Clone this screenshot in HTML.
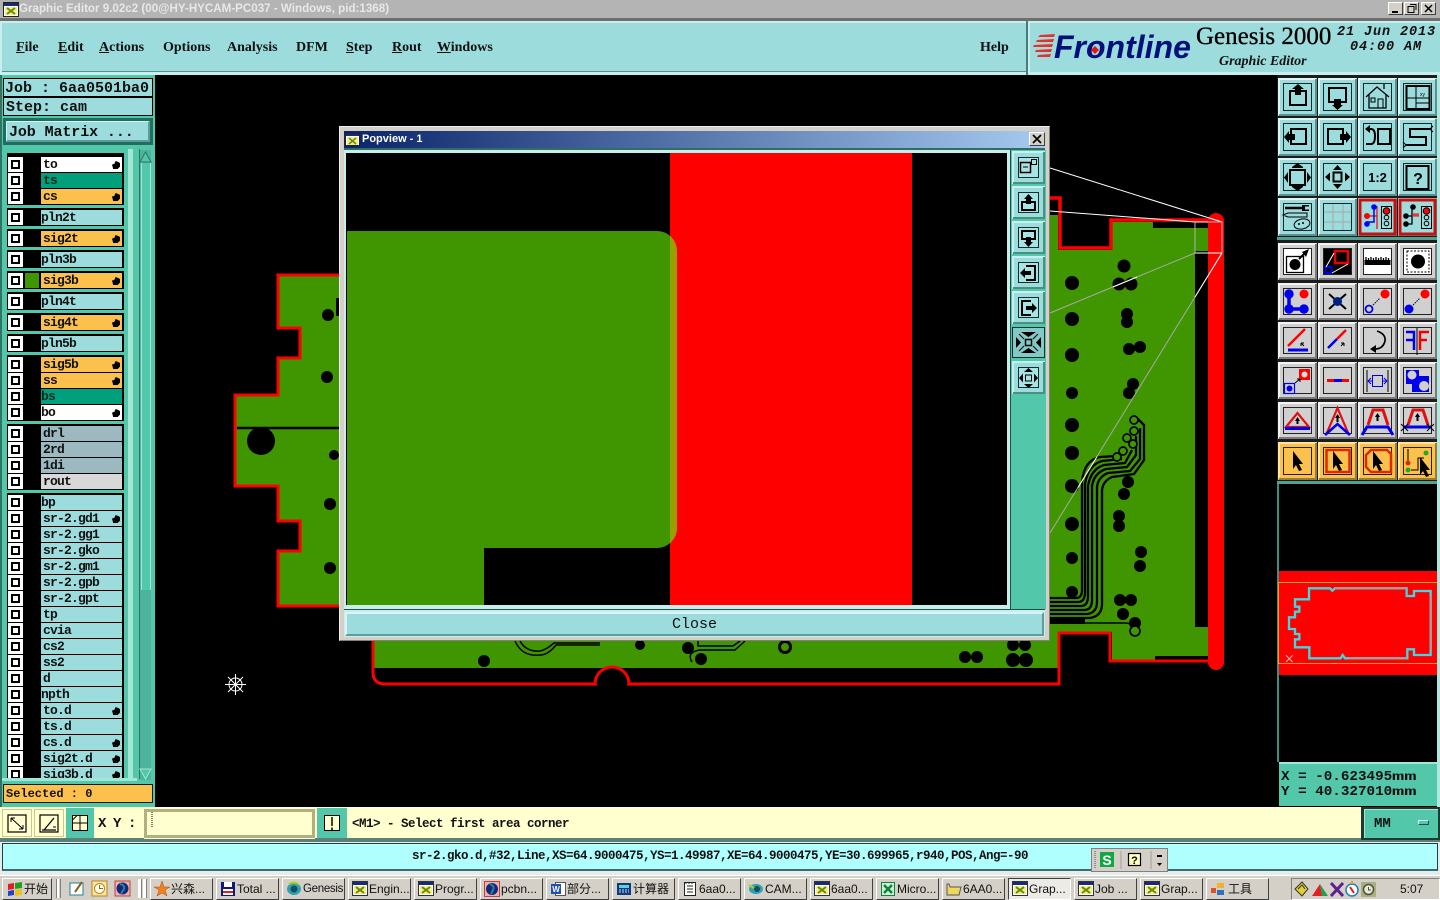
<!DOCTYPE html>
<html><head><meta charset="utf-8"><title>Graphic Editor</title>
<style>
html,body{margin:0;padding:0;background:#000}
#p{position:relative;width:1440px;height:900px;overflow:hidden;background:#000;font-family:"Liberation Mono",monospace}
#p div,#p span.a,#p svg.a{position:absolute}
.m{font:bold 14px/16px "Liberation Serif",serif;color:#111;top:40px}
.m u{text-decoration:underline}
.mono{font-family:"Liberation Mono",monospace;font-weight:bold;color:#111;white-space:pre}
.fr{background:#000;left:7px;width:117px}
.r{left:8px;width:115px;height:15px}
.c{left:0;top:0;width:15px;height:15px;background:#fff}
.c:after{content:"";position:absolute;left:3px;top:3px;width:5px;height:5px;border:2px solid #000;background:#fff}
.n{left:33px;width:81px;height:15px;background:#9cdcdc;font:bold 13px/16px "Liberation Mono",monospace;letter-spacing:-.8px;color:#111;box-sizing:border-box;white-space:pre;padding-left:2px;overflow:hidden}
.z{padding-left:0}
.w{background:#fff}.t{background:#00a07c;color:#002a20}.o{background:#fcc04c}.g{background:#9cb8c0}.l{background:#d8d8d8}
.h{right:2px;top:4px;width:8px;height:8px;background:#000;clip-path:polygon(0 45%,30% 35%,45% 0,70% 10%,100% 25%,100% 70%,70% 100%,15% 100%)}
.tb{top:878px;width:63px;height:22px;background:#d4d0c8;border-top:1px solid #fff;border-left:1px solid #fff;border-right:1px solid #404040;border-bottom:1px solid #404040;box-sizing:border-box;font:12px/20px "Liberation Sans","Noto Sans CJK SC",sans-serif;color:#111;white-space:nowrap;overflow:hidden}
.tb span{position:absolute;left:20px;top:0}
.tb svg{position:absolute;left:3px;top:2px}
.wb{top:2px;width:15px;height:13px;background:#d4d0c8;border-top:1px solid #fff;border-left:1px solid #fff;border-right:1px solid #404040;border-bottom:1px solid #404040;box-sizing:border-box}
.mm{display:inline-block;font-size:12px;transform:scaleX(1.7);transform-origin:left center}
</style></head><body><div id="p">

<!-- canvas -->
<svg class="a" style="left:0;top:0" width="1440" height="900" viewBox="0 0 1440 900">
<path d="M345 275H278V328H300V358H278V395H235V486H278V521H300V551H278V606H345Z" fill="#409600" stroke="#f00" stroke-width="3"/>
<path d="M237 428H345" stroke="#000" stroke-width="2.5"/>
<g fill="#000"><circle cx="261" cy="441" r="14"/><circle cx="328" cy="315" r="6"/><circle cx="327" cy="377" r="6"/><circle cx="334" cy="455" r="5"/><circle cx="330" cy="504" r="6"/><circle cx="330" cy="568" r="6"/><rect x="336" y="298" width="4" height="18"/></g>
<!-- right part -->
<path d="M1045 215H1058V250H1112V222H1208V661H1112V632H1058V668H373V635H1045Z" fill="#409600"/>
<rect x="1153" y="222" width="55" height="6" fill="#000"/>
<rect x="1195" y="251" width="13" height="376" fill="#000"/>
<rect x="1155" y="656" width="53" height="5" fill="#000"/>
<rect x="1208" y="213" width="16" height="457" rx="8" fill="#f00"/>
<path d="M1045 198H1060V248H1111V220H1210" fill="none" stroke="#f00" stroke-width="3.5"/>
<path d="M1210 661H1110V633H1059V684H385Q373 684 373 672V635" fill="none" stroke="#f00" stroke-width="3"/>
<path d="M595 684A17 17 0 0 1 629 684" fill="#000" stroke="#f00" stroke-width="3"/>
<rect x="597" y="682" width="30" height="4" fill="#000"/>
<g fill="#000">
<circle cx="1072" cy="283" r="7"/><circle cx="1072" cy="319" r="7"/><circle cx="1072" cy="355" r="7"/><circle cx="1072" cy="393" r="6"/><circle cx="1072" cy="425" r="7"/><circle cx="1072" cy="453" r="7"/><circle cx="1072" cy="486" r="7"/><circle cx="1072" cy="524" r="7"/><circle cx="1072" cy="558" r="6"/><circle cx="1072" cy="592" r="6"/>
<circle cx="1124" cy="266" r="6.5"/><circle cx="1119" cy="284" r="6.5"/><circle cx="1131" cy="284" r="6.5"/><circle cx="1127" cy="314" r="6"/><circle cx="1127" cy="322" r="6"/><circle cx="1129" cy="349" r="6"/><circle cx="1140" cy="347" r="6"/><circle cx="1133" cy="384" r="6"/><circle cx="1129" cy="393" r="6"/><circle cx="1128" cy="482" r="6"/><circle cx="1124" cy="494" r="6"/><circle cx="1119" cy="516" r="6"/><circle cx="1119" cy="526" r="6"/><circle cx="1141" cy="552" r="6"/><circle cx="1140" cy="566" r="6"/><circle cx="1120" cy="600" r="6"/><circle cx="1131" cy="600" r="6"/><circle cx="1123" cy="614" r="6"/><circle cx="1135" cy="623" r="6"/>
<rect x="1050" y="619" width="35" height="5"/>
<circle cx="484" cy="661" r="6"/><circle cx="640" cy="645" r="5"/><circle cx="688" cy="648" r="6"/><circle cx="701" cy="659" r="6"/><circle cx="965" cy="657" r="6"/><circle cx="977" cy="657" r="6"/><circle cx="1013" cy="645" r="6"/><circle cx="1025" cy="645" r="6"/><circle cx="1013" cy="660" r="7"/><circle cx="1026" cy="660" r="7"/>
</g>
<circle cx="785" cy="647" r="5.5" fill="#409600" stroke="#000" stroke-width="3"/>
<g fill="none" stroke="#000" stroke-width="2.3">
<path d="M1045 598H1076Q1082 598 1082 590V482Q1084 460 1100 457L1116 456"/>
<path d="M1045 602H1078Q1085 602 1085 592V484Q1088 465 1102 461L1122 459"/>
<path d="M1045 606H1081Q1088 606 1088 596V486Q1091 469 1104 465L1125 463L1132 450"/>
<path d="M1045 610H1084Q1092 610 1092 600V486Q1094 473 1106 469L1127 467L1136 455V436"/>
<path d="M1045 614H1088Q1097 612 1097 602V487Q1098 477 1108 473L1130 471L1140 459V428"/>
<path d="M1045 618H1090Q1102 616 1102 604V490Q1103 481 1112 477L1134 474L1144 460V425L1137 418"/>
<path d="M1085 623H1125Q1132 623 1134 628" stroke-width="1.5"/>
<path d="M515 641Q522 657 540 655Q548 655 556 645H600" stroke-width="1.5"/><path d="M520 641Q526 652 540 651Q546 650 554 643H600" stroke-width="1.5"/>
<path d="M692 662Q686 652 700 650H735L745 641" stroke-width="1.5"/><path d="M698 641V646H733L740 641" stroke-width="1.5"/>
</g>
<g fill="#409600" stroke="#000" stroke-width="1.7"><circle cx="1134" cy="420" r="4"/><circle cx="1134" cy="431" r="4"/><circle cx="1127" cy="438" r="4"/><circle cx="1133" cy="444" r="4"/><circle cx="1123" cy="451" r="4"/><circle cx="1117" cy="457" r="4"/><circle cx="1135" cy="631" r="5"/></g>
<g fill="none" stroke-width="1">
<path d="M1050 168L1222 222M1050 211L1195 222" stroke="#fff"/>
<path d="M1195 222H1222V253H1195Z" stroke="#b0b0b0"/>
<path d="M1195 222H1208M1195 253H1222" stroke="#fff"/>
<path d="M1050 313L1195 253" stroke="#a8a8a8"/>
<path d="M1050 533L1222 253" stroke="#a8a8a8"/>
<path d="M1113 287L1137 277M1078 487.500L1097 456.600M1222 253L1195 297" stroke="#fff"/>
</g>
<!-- crosshair -->
<g stroke="#fff" stroke-width="1" fill="none"><path d="M235.500 674V695M225 684.500H246M228 677L243 692M243 677L228 692"/><circle cx="235.500" cy="684.500" r="6.500"/></g>
</svg>

<!-- title bar -->
<div style="left:0;top:0;width:1440px;height:18px;background:#b4b4b4"></div>
<div style="left:0;top:18px;width:1440px;height:3px;background:#6e6e6e"></div>
<svg class="a" style="left:3px;top:2px" width="16" height="15" viewBox="0 0 16 15"><rect x=".5" y=".5" width="15" height="14" fill="#fff" stroke="#222"/><rect x="1" y="1" width="14" height="3" fill="#1a2a7a"/><rect x="2" y="5" width="12" height="8" fill="#f4f088"/><path d="M4 6L12 12M12 6L4 12" stroke="#6a8a10" stroke-width="2"/></svg>
<div style="left:19px;top:2px;font:bold 11.600px/14px 'Liberation Sans',sans-serif;color:#e8e8e8;white-space:pre">Graphic Editor 9.02c2 (00@HY-HYCAM-PC037 - Windows, pid:1368)</div>
<div class="wb" style="left:1388px"><svg width="13" height="11" style="position:absolute;left:0;top:0"><path d="M3 9H9" stroke="#000" stroke-width="2"/></svg></div>
<div class="wb" style="left:1404px"><svg width="13" height="11" style="position:absolute;left:0;top:0"><path d="M5 1.500H11V7M3 3.500H9V9.500H3Z" stroke="#000" fill="#d4d0c8"/></svg></div>
<div class="wb" style="left:1421px"><svg width="13" height="11" style="position:absolute;left:0;top:0"><path d="M3 2L10 9M10 2L3 9" stroke="#000" stroke-width="1.500"/></svg></div>

<!-- menu -->
<div style="left:0;top:21px;width:1440px;height:54px;background:#c8eeee"></div>
<div style="left:2px;top:23px;width:1024px;height:48px;background:#9cdcdc;border-bottom:1px solid #5c8c8c;border-right:1px solid #5c8c8c"></div>
<div style="left:1026px;top:21px;width:2px;height:54px;background:#4a7a7a"></div>
<div style="left:1030px;top:23px;width:410px;height:49px;background:#9cdcdc"></div>
<div class="m" style="left:16px"><u>F</u>ile</div>
<div class="m" style="left:58px"><u>E</u>dit</div>
<div class="m" style="left:99px"><u>A</u>ctions</div>
<div class="m" style="left:163px">Options</div>
<div class="m" style="left:227px">Analysis</div>
<div class="m" style="left:296px">DFM</div>
<div class="m" style="left:346px"><u>S</u>tep</div>
<div class="m" style="left:392px"><u>R</u>out</div>
<div class="m" style="left:437px"><u>W</u>indows</div>
<div class="m" style="left:980px">Help</div>
<svg class="a" style="left:1032px;top:33px" width="26" height="26" viewBox="0 0 26 26"><g fill="#e8302a"><path d="M8 2L23 1L22 4L6 4Z"/><path d="M5 7L22 6L21 9L4 9Z"/><path d="M2 12L21 11L20 14L1 14Z"/><path d="M4 17L20 16L19 19L3 19Z"/><path d="M6 22L19 21L18 24L5 24Z"/></g></svg>
<div style="left:1054px;top:29px;font:italic bold 32px/36px 'Liberation Sans',sans-serif;color:#00107a;white-space:pre">Frontline</div>
<svg class="a" style="left:1089px;top:44px" width="12" height="12"><path d="M6 2L10 6L6 10L2 6Z" fill="#e81010"/></svg>
<div style="left:1196px;top:22px;font:25px/30px 'Liberation Serif',serif;color:#000;-webkit-text-stroke:.3px #000;white-space:pre">Genesis 2000</div>
<div style="left:1219px;top:54px;font:italic bold 14px/16px 'Liberation Serif',serif;color:#111;white-space:pre">Graphic Editor</div>
<div style="left:1337px;top:25px;font:italic bold 13.500px/15px 'Liberation Mono',monospace;letter-spacing:.9px;color:#111;white-space:pre">21 Jun 2013</div>
<div style="left:1350px;top:40px;font:italic bold 13.500px/15px 'Liberation Mono',monospace;letter-spacing:.9px;color:#111;white-space:pre">04:00 AM</div>

<!-- left panel -->
<div style="left:0;top:75px;width:155px;height:733px;background:#52c7a9"></div>
<div style="left:0;top:75px;width:2px;height:733px;background:#2f7565"></div>
<div style="left:3px;top:78px;width:150px;height:38px;background:#000"></div>
<div class="mono" style="left:4px;top:79px;width:148px;height:17px;background:#9cdcdc;font-size:15px;line-height:19px;padding-left:1px;box-sizing:border-box">Job : 6aa0501ba0</div>
<div class="mono" style="left:4px;top:98px;width:148px;height:17px;background:#9cdcdc;font-size:15px;line-height:19px;padding-left:2px;box-sizing:border-box">Step: cam</div>
<div style="left:3px;top:118px;width:150px;height:27px;background:#1f6f5c"></div>
<div class="mono" style="left:6px;top:121px;width:144px;height:21px;background:#9cdcdc;border-top:1px solid #d8f5f5;border-left:1px solid #d8f5f5;border-right:2px solid #5c9c9c;border-bottom:2px solid #5c9c9c;box-sizing:border-box;font-size:15px;line-height:22px;padding-left:2px;letter-spacing:-.1px">Job Matrix ...</div>

<!-- scroll -->
<div style="left:128px;top:149px;width:5px;height:630px;background:#a3e6d6"></div>
<div style="left:139px;top:149px;width:1px;height:630px;background:#2f7565"></div>
<div style="left:140px;top:150px;width:11px;height:630px;background:#4db39a"></div>
<div style="left:141px;top:163px;width:10px;height:427px;background:#52c7a9;border-left:1px solid #a3e6d6;border-right:1px solid #a3e6d6;box-sizing:border-box"></div>
<svg class="a" style="left:139px;top:150px" width="13" height="14"><path d="M6.500 2L12 12H1Z" fill="#52c7a9" stroke="#2f7565"/></svg>
<svg class="a" style="left:139px;top:767px" width="13" height="13"><path d="M6.500 12L12 2H1Z" fill="#52c7a9" stroke="#a3e6d6"/></svg>

<!-- layers -->
<div class="fr" style="top:153px;height:52px"></div>
<div class="fr" style="top:208px;height:18px"></div>
<div class="fr" style="top:229px;height:18px"></div>
<div class="fr" style="top:250px;height:18px"></div>
<div class="fr" style="top:271px;height:18px"></div>
<div class="fr" style="top:292px;height:18px"></div>
<div class="fr" style="top:313px;height:18px"></div>
<div class="fr" style="top:334px;height:18px"></div>
<div class="fr" style="top:355px;height:66px"></div>
<div class="fr" style="top:424px;height:66px"></div>
<div class="fr" style="top:493px;height:285px"></div>

<div class="r" style="top:157px"><div class="c"></div><div class="n w">to<div class="h"></div></div></div>
<div class="r" style="top:173px"><div class="c"></div><div class="n t">ts</div></div>
<div class="r" style="top:189px"><div class="c"></div><div class="n o">cs<div class="h"></div></div></div>
<div class="r" style="top:210px"><div class="c"></div><div class="n z">pln2t</div></div>
<div class="r" style="top:231px"><div class="c"></div><div class="n o">sig2t<div class="h"></div></div></div>
<div class="r" style="top:252px"><div class="c"></div><div class="n z">pln3b</div></div>
<div class="r" style="top:273px"><div class="c"></div><div style="left:17px;top:0;width:14px;height:15px;background:#409600"></div><div class="n o">sig3b<div class="h"></div></div></div>
<div class="r" style="top:294px"><div class="c"></div><div class="n z">pln4t</div></div>
<div class="r" style="top:315px"><div class="c"></div><div class="n o">sig4t<div class="h"></div></div></div>
<div class="r" style="top:336px"><div class="c"></div><div class="n z">pln5b</div></div>
<div class="r" style="top:357px"><div class="c"></div><div class="n o">sig5b<div class="h"></div></div></div>
<div class="r" style="top:373px"><div class="c"></div><div class="n o">ss<div class="h"></div></div></div>
<div class="r" style="top:389px"><div class="c"></div><div class="n t z">bs</div></div>
<div class="r" style="top:405px"><div class="c"></div><div class="n w z">bo<div class="h"></div></div></div>
<div class="r" style="top:426px"><div class="c"></div><div class="n g">drl</div></div>
<div class="r" style="top:442px"><div class="c"></div><div class="n g">2rd</div></div>
<div class="r" style="top:458px"><div class="c"></div><div class="n g">1di</div></div>
<div class="r" style="top:474px"><div class="c"></div><div class="n l">rout</div></div>
<div class="r" style="top:495px"><div class="c"></div><div class="n z">bp</div></div>
<div class="r" style="top:511px"><div class="c"></div><div class="n">sr-2.gd1<div class="h"></div></div></div>
<div class="r" style="top:527px"><div class="c"></div><div class="n">sr-2.gg1</div></div>
<div class="r" style="top:543px"><div class="c"></div><div class="n">sr-2.gko</div></div>
<div class="r" style="top:559px"><div class="c"></div><div class="n">sr-2.gm1</div></div>
<div class="r" style="top:575px"><div class="c"></div><div class="n">sr-2.gpb</div></div>
<div class="r" style="top:591px"><div class="c"></div><div class="n">sr-2.gpt</div></div>
<div class="r" style="top:607px"><div class="c"></div><div class="n">tp</div></div>
<div class="r" style="top:623px"><div class="c"></div><div class="n">cvia</div></div>
<div class="r" style="top:639px"><div class="c"></div><div class="n">cs2</div></div>
<div class="r" style="top:655px"><div class="c"></div><div class="n">ss2</div></div>
<div class="r" style="top:671px"><div class="c"></div><div class="n">d</div></div>
<div class="r" style="top:687px"><div class="c"></div><div class="n z">npth</div></div>
<div class="r" style="top:703px"><div class="c"></div><div class="n">to.d<div class="h"></div></div></div>
<div class="r" style="top:719px"><div class="c"></div><div class="n">ts.d</div></div>
<div class="r" style="top:735px"><div class="c"></div><div class="n">cs.d<div class="h"></div></div></div>
<div class="r" style="top:751px"><div class="c"></div><div class="n">sig2t.d<div class="h"></div></div></div>
<div class="r" style="top:767px;height:11px;overflow:hidden"><div class="c"></div><div class="n">sig3b.d<div class="h"></div></div></div>
<div style="left:2px;top:778px;width:135px;height:3px;background:#a3e6d6"></div>
<div class="mono" style="left:3px;top:784px;width:150px;height:19px;background:#fcc04c;border:1px solid #1a1a1a;box-sizing:border-box;font-size:12px;line-height:19px;padding-left:2px">Selected : 0</div>

<!-- right toolbar -->
<div style="left:1277px;top:75px;width:163px;height:409px;background:#1c1c1c"></div>
<div style="left:1277px;top:75px;width:160px;height:2px;background:#1c1c1c"></div>
<div style="left:1277px;top:237px;width:160px;height:3px;background:#52a090"></div>
<div style="left:1277px;top:481px;width:163px;height:3px;background:#52a090"></div>
<div style="left:1277px;top:484px;width:2px;height:278px;background:#3f8f7f"></div>
<div style="left:1437px;top:75px;width:3px;height:733px;background:#b0e8e0"></div>
<svg class="a" style="left:0;top:0" width="1440" height="900" viewBox="0 0 1440 900">
<defs>
<g id="bc"><rect width="39" height="38" fill="#9cdcdc"/><path d="M1 37V1H38" fill="none" stroke="#dcf6f6" stroke-width="2"/><path d="M1 37H38V1" fill="none" stroke="#5a9090" stroke-width="2"/><rect x="5.500" y="5.500" width="28" height="27" fill="none" stroke="#102a2a"/></g>
<g id="bg"><rect width="39" height="37" fill="#d0d0d0"/><path d="M1 36V1H38" fill="none" stroke="#f4f4f4" stroke-width="2"/><path d="M1 36H38V1" fill="none" stroke="#7a7a7a" stroke-width="2"/><rect x="5.500" y="5.500" width="28" height="26" fill="none" stroke="#222"/></g>
<g id="bo"><rect width="39" height="38" fill="#fcc04c"/><path d="M1 37V1H38" fill="none" stroke="#ffe6a0" stroke-width="2"/><path d="M1 37H38V1" fill="none" stroke="#9c7a30" stroke-width="2"/><rect x="5.500" y="5.500" width="28" height="27" fill="none" stroke="#222"/></g>
<g id="bw"><rect width="39" height="37" fill="#d0d0d0"/><path d="M1 36V1H38" fill="none" stroke="#f4f4f4" stroke-width="2"/><path d="M1 36H38V1" fill="none" stroke="#7a7a7a" stroke-width="2"/><rect x="5.500" y="5.500" width="28" height="26" fill="#fff" stroke="#222"/></g>
<path id="cur" d="M0 0L10 13H6L9 19L6 20L3 14L0 18Z" fill="#000"/>
<g id="tl"><rect x="23.500" y="8.500" width="10" height="22" fill="#9cdcdc" stroke="#000"/><circle cx="28.500" cy="13" r="3.300" fill="#f00" stroke="#000"/><circle cx="28.500" cy="19.500" r="2.300" fill="none" stroke="#000"/><circle cx="28.500" cy="25.500" r="2.300" fill="none" stroke="#000"/></g>
</defs>
<!-- row1 -->
<g transform="translate(1278 78)"><use href="#bc"/><rect x="12" y="13" width="16" height="14" fill="none" stroke="#000" stroke-width="2"/><path d="M20 6L26 11H23V17H17V11H14Z"/></g>
<g transform="translate(1318 78)"><use href="#bc"/><rect x="11" y="10" width="17" height="14" fill="none" stroke="#000" stroke-width="2"/><path d="M19.500 32L14 27H16V21H23V27H25Z"/></g>
<g transform="translate(1358 78)"><use href="#bc"/><path d="M8 19L19 9L31 19M11 17V30H28V17M26 11V6" fill="none" stroke="#000" stroke-width="1.300"/><rect x="13" y="20" width="4" height="4" fill="none" stroke="#000"/><rect x="20" y="21" width="5" height="9" fill="none" stroke="#000"/></g>
<g transform="translate(1398 78)"><use href="#bc"/><rect x="8.500" y="8" width="23" height="23" fill="none" stroke="#000" stroke-width="2"/><path d="M18 8V31M8 20H32M18 25H32" stroke="#000"/><text x="22" y="18" font-size="5" font-family="Liberation Sans" fill="#000">xy</text></g>
<!-- row2 -->
<g transform="translate(1278 118)"><use href="#bc"/><rect x="13" y="11" width="15" height="15" fill="none" stroke="#000" stroke-width="2"/><path d="M6 19L11 13V16H17V22H11V25Z"/></g>
<g transform="translate(1318 118)"><use href="#bc"/><rect x="10" y="11" width="15" height="15" fill="none" stroke="#000" stroke-width="2"/><path d="M33 19L28 13V16H22V22H28V25Z"/></g>
<g transform="translate(1358 118)"><use href="#bc"/><rect x="20" y="11" width="12" height="15" fill="none" stroke="#000" stroke-width="2"/><path d="M11 11H13Q17 11 17 18Q17 26 13 26H8" fill="none" stroke="#000" stroke-width="2"/><path d="M7 11L12 7V15Z"/></g>
<g transform="translate(1398 118)"><use href="#bc"/><path d="M32 11H12V19H28V27H8" fill="none" stroke="#000" stroke-width="2"/><path d="M32 11L35 8M32 11L35 14M8 27L5 24M8 27L5 30" stroke="#000"/></g>
<!-- row3 -->
<g transform="translate(1278 158)"><use href="#bc"/><rect x="12" y="12" width="15" height="15" fill="none" stroke="#000" stroke-width="2"/><path d="M19.500 5L25 9V10H14V9ZM19.500 33L25 29V28H14V29ZM6 19.500L10 14V25ZM33 19.500L29 14V25Z"/></g>
<g transform="translate(1318 158)"><use href="#bc"/><rect x="15.500" y="14.500" width="8" height="9" fill="none" stroke="#000" stroke-width="2"/><path d="M19.500 7L24 12H15ZM19.500 31L24 26H15ZM7 19L12 14.500V23.500ZM32 19L27 14.500V23.500Z"/></g>
<g transform="translate(1358 158)"><use href="#bc"/><text x="19.500" y="24" text-anchor="middle" font-size="13" font-weight="bold" font-family="Liberation Sans" fill="#000">1:2</text></g>
<g transform="translate(1398 158)"><use href="#bc"/><rect x="8.500" y="8" width="22" height="23" fill="none" stroke="#000" stroke-width="2"/><text x="20" y="26" text-anchor="middle" font-size="16" font-weight="bold" font-family="Liberation Sans" fill="#000">?</text></g>
<!-- row4 -->
<g transform="translate(1278 198)"><use href="#bc"/><path d="M7 10H25" stroke="#000" stroke-width="2.500"/><path d="M24 7H31V8.500H27V11.500H31V13H24Z"/><path d="M5 17L10 15H29V19H10Z" fill="none" stroke="#000"/><ellipse cx="24" cy="26" rx="8" ry="5" fill="none" stroke="#000" transform="rotate(-12 24 26)"/><circle cx="21" cy="26" r="1" /><circle cx="25" cy="25" r="1"/></g>
<g transform="translate(1318 198)"><use href="#bc"/><path d="M15 6V32M25 6V32M6 14H33M6 24H33" stroke="#a8a8a8" stroke-width="1"/></g>
<g transform="translate(1358 198)"><use href="#bc"/><rect x="2" y="2" width="35" height="34" fill="#9cdcdc" stroke="#c81010" stroke-width="3"/><use href="#tl"/><path d="M19 8V31M8 18H19" stroke="#f00" stroke-width="1.200"/><circle cx="9" cy="18" r="3" fill="#f00"/><path d="M16 10V24H8" fill="none" stroke="#00f" stroke-width="1.500"/><circle cx="16" cy="9" r="2.800" fill="#00f"/><circle cx="9" cy="26" r="2.800" fill="#00f"/></g>
<g transform="translate(1398 198)"><use href="#bc"/><rect x="2" y="2" width="35" height="34" fill="#9cdcdc" stroke="#c81010" stroke-width="3"/><use href="#tl"/><path d="M14 9V18H8M14 18V26H8" fill="none" stroke="#000" stroke-width="1.300"/><path d="M14 17H21M16 15V19M18 15V19M20 15V19" stroke="#f00"/><circle cx="15" cy="9" r="2.800"/><circle cx="8" cy="18" r="2.800"/><circle cx="8" cy="26" r="2.800"/></g>
<!-- row5 -->
<g transform="translate(1278 243)"><use href="#bw"/><rect x="8.500" y="13.500" width="17" height="16" fill="#fff" stroke="#000" stroke-width="1.300"/><circle cx="17" cy="21.500" r="5.500"/><path d="M21 16L27 10" stroke="#000" stroke-width="2"/><path d="M31 6L28 14L24 9Z"/></g>
<g transform="translate(1318 243)"><use href="#bw"/><rect x="6" y="6" width="27" height="25" fill="#000"/><rect x="17" y="8" width="13" height="12" fill="none" stroke="#e00" stroke-width="2.500"/><rect x="7.500" y="24" width="6" height="6" fill="none" stroke="#00e" stroke-width="2"/><path d="M16 10L8 24M30 21L14 30" stroke="#fff"/></g>
<g transform="translate(1358 243)"><use href="#bw"/><rect x="6.500" y="17" width="26" height="5" fill="#000"/><path d="M8 14V17M10.500 15V17M13 14V17M15.500 15V17M18 14V17M20.500 15V17M23 14V17M25.500 15V17M28 14V17M30.500 15V17" stroke="#000" stroke-width="1.300"/></g>
<g transform="translate(1398 243)"><use href="#bw"/><rect x="9" y="8" width="22" height="21" fill="none" stroke="#000" stroke-dasharray="2 1.500"/><circle cx="20" cy="18.500" r="7"/></g>
<!-- row6 -->
<g transform="translate(1278 283)"><use href="#bg"/><path d="M11 11V26H26" fill="none" stroke="#00e" stroke-width="3.500"/><circle cx="11" cy="11" r="4.700" fill="#00e"/><circle cx="11" cy="26" r="4.700" fill="#00e"/><circle cx="26" cy="26" r="4.700" fill="#00e"/><circle cx="26" cy="11" r="4.500" fill="#f00"/></g>
<g transform="translate(1318 283)"><use href="#bg"/><path d="M11 11L28 26M28 11L11 26" stroke="#000" stroke-width="2"/><circle cx="19.500" cy="18.500" r="4.500" fill="#002080"/></g>
<g transform="translate(1358 283)"><use href="#bg"/><circle cx="27" cy="11" r="4.500" fill="#f00"/><circle cx="11" cy="26" r="3.500" fill="none" stroke="#00e" stroke-width="1.800"/><path d="M15 22L22 15" stroke="#000" stroke-dasharray="1.500 1"/></g>
<g transform="translate(1398 283)"><use href="#bg"/><circle cx="27" cy="11" r="4.500" fill="#f00"/><circle cx="11" cy="26" r="4.500" fill="#00e"/><path d="M15 22L22 15" stroke="#000" stroke-dasharray="1.500 1"/></g>
<!-- row7 -->
<g transform="translate(1278 322)"><use href="#bg"/><path d="M10 24L27 7" stroke="#f00" stroke-width="2.500"/><path d="M10 28H30" stroke="#00e" stroke-width="3"/><path d="M23 21L26 24M23 21V24M23 21H26" stroke="#000"/></g>
<g transform="translate(1318 322)"><use href="#bg"/><path d="M19 17L28 8" stroke="#f00" stroke-width="2.500"/><path d="M10 26L19 17" stroke="#00e" stroke-width="2.500"/><path d="M23 24L26 21M26 21H23M26 21V24" stroke="#000"/></g>
<g transform="translate(1358 322)"><use href="#bg"/><path d="M19 9Q28 12 27 19Q25 27 17 27" fill="none" stroke="#000" stroke-width="1.700"/><path d="M12 27L18 23V31Z"/></g>
<g transform="translate(1398 322)"><use href="#bg"/><path d="M8 10H16V28M8 18H16" fill="none" stroke="#00e" stroke-width="2.500"/><path d="M19 6V33" stroke="#000"/><path d="M22 28V10H31M22 18H29" fill="none" stroke="#e00" stroke-width="2.500"/></g>
<!-- row8 -->
<g transform="translate(1278 362)"><use href="#bg"/><rect x="21" y="7" width="11" height="11" fill="#f00"/><circle cx="26.500" cy="12.500" r="3" fill="#ddd"/><rect x="6.500" y="21.500" width="10" height="10" fill="none" stroke="#00e" stroke-width="1.200"/><circle cx="11.500" cy="26.500" r="3" fill="#00e"/><path d="M17 21L22 17M22 17H19M22 17V20" stroke="#000"/></g>
<g transform="translate(1318 362)"><use href="#bg"/><path d="M9 18.500H31" stroke="#f00" stroke-width="3"/><path d="M16 18.500H24" stroke="#00e" stroke-width="3"/></g>
<g transform="translate(1358 362)"><use href="#bg"/><path d="M9 8V30M30 8V30" stroke="#000"/><path d="M10 19H29M10 19L13 16M10 19L13 22M29 19L26 16M29 19L26 22" stroke="#00e" fill="none"/><rect x="14.500" y="13.500" width="10" height="11" fill="#d0d0d0" stroke="#00e"/></g>
<g transform="translate(1398 362)"><use href="#bg"/><path d="M8 8H21V14H31V30H14V22H8Z" fill="#00e"/><circle cx="14" cy="13" r="4.500" fill="#d0d0d0"/><circle cx="26" cy="24" r="5" fill="#d0d0d0"/></g>
<!-- row9 -->
<g transform="translate(1278 402)"><use href="#bg"/><path d="M8 25L19.500 11L31 25Z" fill="none" stroke="#e01010" stroke-width="2.200"/><path d="M7 26.500H32" stroke="#00e" stroke-width="3"/><path d="M19.500 15L22 19H20.500V22H18.500V19H17Z"/></g>
<g transform="translate(1318 402)"><use href="#bg"/><path d="M8 33L19.500 6L31 33" fill="none" stroke="#e01010" stroke-width="2.200"/><path d="M7 33L19.500 22L32 33" fill="none" stroke="#00e" stroke-width="2.500"/><path d="M19.500 12L22 16H20.500V20H18.500V16H17Z"/></g>
<g transform="translate(1358 402)"><use href="#bg"/><path d="M10 23L15 8H25L30 23" fill="none" stroke="#e01010" stroke-width="3"/><path d="M4 33L9 25H30L35 33" fill="none" stroke="#00e" stroke-width="3"/><path d="M19.500 11L22 15H20.500V19H18.500V15H17Z"/></g>
<g transform="translate(1398 402)"><use href="#bg"/><path d="M10 23L15 8H25L30 23" fill="none" stroke="#e01010" stroke-width="3"/><path d="M5 25H34" stroke="#00e" stroke-width="3"/><path d="M3 22L10 29M10 22L3 29M29 22L36 29M36 22L29 29" stroke="#000"/><path d="M19.500 11L22 15H20.500V19H18.500V15H17Z"/></g>
<!-- row10 -->
<g transform="translate(1278 442)"><use href="#bo"/><use href="#cur" x="15" y="9"/></g>
<g transform="translate(1318 442)"><use href="#bo"/><rect x="8.500" y="8" width="23" height="22" fill="none" stroke="#e02800" stroke-width="2.500"/><use href="#cur" x="15" y="9"/></g>
<g transform="translate(1358 442)"><use href="#bo"/><path d="M13 8H29L33 12V30H13L8 25V13Z" fill="none" stroke="#e02800" stroke-width="2.500"/><use href="#cur" x="15" y="9"/></g>
<g transform="translate(1398 442)"><use href="#bo"/><path d="M10 7V21M13 28H20V16H26" fill="none" stroke="#000"/><circle cx="10" cy="21" r="2.500" fill="#e02800"/><circle cx="10" cy="28" r="2.500" fill="#2a2"/><circle cx="28" cy="11" r="2.500" fill="#2a2"/><use href="#cur" x="22" y="15"/></g>
<!-- minimap -->
<rect x="1279" y="571" width="158" height="104" fill="#f00"/>
<path d="M1279 582.500H1437M1279 663.500H1437M1278.500 582V664" stroke="#f0a020" fill="none"/>
<g transform="translate(1270 560) scale(.3333)" fill="none" stroke-width="7">
<path d="M117 85V118H75V140H88V155H75V172H57V207H75V222H88V238H75V262H118V295H212L218 285L225 295H412V268H432V285H482V93H432V108H410V85H195L187 92L180 85Z" stroke="#3fd8e0"/>
<path d="M195 85H410M482 108V270M235 295H410" stroke="#a0a0a0"/>
<path d="M48 286L68 306M68 286L48 306" stroke="#f0c8c8" stroke-width="3"/>
</g>
</svg>
<div style="left:1279px;top:762px;width:158px;height:44px;background:#52c7a9;border-top:2px solid #a3e6d6;box-sizing:border-box"></div>
<div class="mono" style="left:1281px;top:769px;font-size:14.250px;line-height:16px">X = -0.623495<span class="mm">mm</span></div>
<div class="mono" style="left:1281px;top:784px;font-size:14.250px;line-height:16px">Y = 40.327010<span class="mm">mm</span></div>

<!-- popup -->
<div style="left:339px;top:126px;width:711px;height:515px;background:#d4d0c8;border:1px solid #808080;border-top-color:#f0f0f0;border-left-color:#f0f0f0;box-sizing:border-box"></div>
<div style="left:344px;top:131px;width:701px;height:17px;background:linear-gradient(90deg,#0a246a,#a6caf0)"></div>
<svg class="a" style="left:345px;top:133px" width="15" height="13" viewBox="0 0 15 13"><rect x=".5" y=".5" width="14" height="12" fill="#fff" stroke="#222"/><rect x="1" y="1" width="13" height="2" fill="#1a2a7a"/><rect x="2" y="4" width="11" height="8" fill="#f4f088"/><path d="M4 5L11 11M11 5L4 11" stroke="#6a8a10" stroke-width="1.500"/></svg>
<div style="left:362px;top:132px;font:bold 11px/14px 'Liberation Sans',sans-serif;color:#fff;white-space:pre">Popview - 1</div>
<div style="left:1029px;top:132px;width:16px;height:14px;background:#d4d0c8;border-top:1px solid #fff;border-left:1px solid #fff;border-right:1px solid #404040;border-bottom:1px solid #404040;box-sizing:border-box"><svg width="14" height="12" style="position:absolute;left:0;top:0"><path d="M3 2L11 10M11 2L3 10" stroke="#000" stroke-width="1.700"/></svg></div>
<div style="left:344px;top:148px;width:701px;height:489px;background:#c8eeee"></div>
<div style="left:344px;top:148px;width:701px;height:2px;background:#2f6f5f"></div>
<div style="left:1010px;top:150px;width:36px;height:459px;background:#52c7a9;border-left:1px solid #1f4f45;box-sizing:border-box"></div>
<div style="left:346px;top:153px;width:661px;height:452px;background:#000;overflow:hidden">
<div style="left:324px;top:0;width:242px;height:452px;background:#f00"></div>
<div style="left:1px;top:78px;width:330px;height:317px;background:#409600;border-radius:0 20px 20px 0;overflow:hidden"><div style="left:323px;top:0;width:7px;height:317px;background:#98a000"></div></div>
<div style="left:1px;top:395px;width:137px;height:57px;background:#409600"></div>
</div>
<div style="left:344px;top:609px;width:701px;height:1px;background:#1f4f45"></div>
<div class="mono" style="left:345px;top:612px;width:699px;height:24px;background:#9cdcdc;border-top:2px solid #d8f5f5;border-left:2px solid #d8f5f5;border-right:2px solid #5c9c9c;border-bottom:2px solid #5c9c9c;box-sizing:border-box;font-weight:normal;font-size:15px;line-height:22px;text-align:center">Close</div>
<svg class="a" style="left:1012px;top:151px" width="33" height="246" viewBox="0 0 33 246">
<defs><g id="pb"><rect width="33" height="33" fill="#9cdcdc"/><rect x="1" y="1" width="31" height="31" fill="none" stroke="#c8f0f0" stroke-width="2"/><path d="M1 32H32V1" fill="none" stroke="#4a9080" stroke-width="2"/><rect x="6.500" y="6.500" width="20" height="20" fill="#a8e4e4" stroke="#103030"/></g></defs>
<use href="#pb"/><rect x="8.500" y="11.500" width="10" height="10" fill="none" stroke="#000" stroke-width="1.500"/><rect x="19.500" y="8.500" width="5" height="5" fill="none" stroke="#000"/><path d="M11 16H16" stroke="#000"/>
<g transform="translate(0 35)"><use href="#pb"/><rect x="10" y="16" width="13" height="8" fill="none" stroke="#000" stroke-width="2"/><path d="M16.500 8L21 13H19V18H14V13H12Z"/></g>
<g transform="translate(0 70)"><use href="#pb"/><path d="M10 10H23V18H10Z" fill="none" stroke="#000" stroke-width="2"/><path d="M16.500 26L21 21H19V16H14V21H12Z"/></g>
<g transform="translate(0 105)"><use href="#pb"/><path d="M14 10H23V24H14" fill="none" stroke="#000" stroke-width="2"/><path d="M8 17L13 12V15H19V19H13V22Z"/></g>
<g transform="translate(0 140)"><use href="#pb"/><path d="M19 10H10V24H19" fill="none" stroke="#000" stroke-width="2"/><path d="M25 17L20 12V15H14V19H20V22Z"/></g>
<g transform="translate(0 176)"><rect width="33" height="31" fill="#84c8c8"/><rect x=".5" y=".5" width="32" height="30" fill="none" stroke="#103030"/><rect x="13.500" y="12.500" width="6" height="6" fill="none" stroke="#000" stroke-width="1.500"/><path d="M9 5H24L16.500 10ZM9 26H24L16.500 21ZM4 10V21L9 15.500ZM29 10V21L24 15.500Z"/><path d="M7 7L12 12M26 7L21 12M7 24L12 19M26 24L21 19" stroke="#000"/></g>
<g transform="translate(0 210)"><use href="#pb"/><rect x="13.500" y="14" width="6" height="6" fill="none" stroke="#000"/><path d="M16.500 7L21 11H12ZM16.500 27L21 23H12ZM7 17L11 12.500V21.500ZM26 17L22 12.500V21.500Z"/></g>
</svg>

<!-- bottom bar -->
<div style="left:0;top:807px;width:1440px;height:33px;background:#ffffd0"></div>
<div style="left:0;top:838px;width:1440px;height:5px;background:#5a8078"></div>
<svg class="a" style="left:0;top:807px" width="350" height="32" viewBox="0 0 350 32">
<g fill="none" stroke="#c8c890"><rect x="2.500" y="2.500" width="29" height="27"/><rect x="34.500" y="2.500" width="29" height="27"/></g>
<rect x="8" y="8" width="18" height="17" fill="none" stroke="#000" stroke-width="1.200"/><path d="M11 11L23 22M11 11V15M11 11H15M23 22V18M23 22H19" stroke="#000" fill="none"/>
<rect x="40" y="8" width="18" height="17" fill="none" stroke="#000" stroke-width="1.200"/><path d="M42 23H56M44 23L54 11" stroke="#000" stroke-width="1.200" fill="none"/><path d="M53 20h3" stroke="#000"/>
<rect x="66" y="1" width="28" height="30" fill="#52c7a9"/><rect x="72.500" y="8.500" width="15" height="15" fill="#ffffd0" stroke="#000"/><path d="M80 8V24M72 16H88M72.500 13L77 8.500" stroke="#000"/>
<rect x="144" y="2" width="171" height="30" fill="#ffffd0"/><rect x="145.500" y="3.500" width="168" height="26" fill="none" stroke="#b0b080" stroke-width="3"/>
<path d="M152 5V20" stroke="#000" stroke-dasharray="1 1"/>
<rect x="317" y="1" width="30" height="30" fill="#52c7a9"/><rect x="324.500" y="8.500" width="15" height="15" fill="#ffffd0" stroke="#000"/><path d="M332 10V19M332 20.500V23" stroke="#000" stroke-width="1.500"/>
</svg>
<div class="mono" style="left:98px;top:816px;font-size:14px;line-height:16px;letter-spacing:-.9px">X Y :</div>
<div class="mono" style="left:352px;top:816px;font-size:12.500px;line-height:16px;letter-spacing:-.5px">&lt;M1&gt; - Select first area corner</div>
<div style="left:1361px;top:807px;width:79px;height:33px;background:#1c3a32"></div>
<div class="mono" style="left:1364px;top:809px;width:74px;height:29px;background:#52c7a9;border-top:1px solid #a3e6d6;border-left:1px solid #a3e6d6;box-sizing:border-box;font-size:14px;line-height:28px;padding-left:9px">MM</div>
<div style="left:1418px;top:820px;width:11px;height:5px;background:#52c7a9;border:1px solid #1f4f45;border-top-color:#d8f5f5;border-left-color:#d8f5f5;box-sizing:border-box"></div>

<!-- status -->
<div style="left:0;top:842px;width:1440px;height:33px;background:#e4ecec"></div>
<div style="left:2px;top:843px;width:1436px;height:28px;background:#b0ffff;border:1px solid #204040;border-bottom:2px solid #3f6a6a;box-sizing:border-box"></div>
<div class="mono" style="left:0;width:1440px;text-align:center;top:848px;font-size:12.500px;letter-spacing:-.5px;line-height:16px">sr-2.gko.d,#32,Line,XS=64.9000475,YS=1.49987,XE=64.9000475,YE=30.699965,r940,POS,Ang=-90</div>
<div style="left:1091px;top:848px;width:77px;height:24px;background:#d4d0c8;border:1px solid #808080;box-sizing:border-box"></div>
<svg class="a" style="left:1091px;top:848px" width="77" height="24" viewBox="0 0 77 24">
<path d="M4 3V21" stroke="#909090" stroke-dasharray="1 1" stroke-width="2"/><rect x="9" y="4" width="14" height="15" fill="#10a840"/><text x="16" y="17" text-anchor="middle" font-size="14" font-weight="bold" font-family="Liberation Sans" fill="#fff">S</text>
<path d="M30 3V21M60 3V21" stroke="#a0a0a0"/><rect x="37.500" y="5.500" width="12" height="12" fill="#ffffc0" stroke="#000" stroke-width="1.200"/><text x="43.500" y="16" text-anchor="middle" font-size="11" font-weight="bold" font-family="Liberation Sans" fill="#000">?</text><path d="M66 8H71" stroke="#000" stroke-width="2"/><path d="M66 15H71L68.500 18Z"/>
</svg>

<!-- taskbar -->
<div style="left:0;top:875px;width:1440px;height:25px;background:#d4d0c8;border-top:1px solid #fff;box-sizing:border-box"></div>
<div class="tb" style="left:2px;width:50px;font-size:12px"><svg width="18" height="16" viewBox="0 0 18 16"><path d="M2 3L8 2V8L2 9Z" fill="#e02020"/><path d="M9 2L16 1V7L9 8Z" fill="#20a020"/><path d="M2 10L8 9V14L2 15Z" fill="#2040d0"/><path d="M9 9L16 8V14L9 15Z" fill="#e8c020"/></svg><span style="left:21px">开始</span></div>
<div style="left:56px;top:879px;width:1px;height:19px;background:#808080"></div><div style="left:57px;top:879px;width:2px;height:19px;background:#fff"></div>
<div style="left:60px;top:879px;width:1px;height:19px;background:#808080"></div>
<svg class="a" style="left:68px;top:879px" width="64" height="18" viewBox="0 0 64 18">
<rect x="2" y="4" width="13" height="12" fill="#fff" stroke="#208090"/><path d="M7 13L14 3" stroke="#806020" stroke-width="2"/>
<rect x="24" y="2" width="15" height="15" fill="#f8e8a0" stroke="#c08020"/><circle cx="31.500" cy="9.500" r="5" fill="#ffe" stroke="#c08020"/><path d="M31.500 6V9.500H35" stroke="#a06010" fill="none"/>
<rect x="47" y="2" width="15" height="15" fill="#f0b0b0" stroke="#c04040"/><circle cx="54.500" cy="9.500" r="6" fill="#102a7a"/><path d="M52 5Q57 6 56 10Q54 13 53 15" stroke="#2a80a0" stroke-width="2" fill="none"/>
</svg>
<div style="left:138px;top:879px;width:3px;height:19px;background:#fff;border-right:1px solid #808080"></div>
<div style="left:143px;top:879px;width:3px;height:19px;background:#fff;border-right:1px solid #808080"></div>
<svg width="0" height="0" class="a" style="left:0;top:0"><defs>
<g id="wi"><rect x=".5" y=".5" width="15" height="14" fill="#fff" stroke="#333"/><rect x="1" y="1" width="14" height="3" fill="#1a2a7a"/><rect x="2" y="5" width="12" height="8" fill="#f4f088"/><path d="M4 6L12 12M12 6L4 12" stroke="#6a8a10" stroke-width="2"/></g>
</defs></svg>
<div class="tb" style="left:150px"><svg width="16" height="16" viewBox="0 0 16 16"><path d="M8 0L10 6H16L11 9L13 15L8 12L3 15L5 9L0 6H6Z" fill="#f08020" stroke="#a85010" stroke-width=".5"/></svg><span>兴森...</span></div>
<div class="tb" style="left:216px"><svg width="16" height="16" viewBox="0 0 16 16"><rect x="1" y="1" width="14" height="14" fill="#101880"/><rect x="4" y="1" width="8" height="5" fill="#fff"/><rect x="3" y="8" width="10" height="2" fill="#fff"/><rect x="3" y="10" width="10" height="2" fill="#e02020"/><rect x="3" y="12" width="10" height="2" fill="#fff"/></svg><span>Total ...</span></div>
<div class="tb" style="left:282px"><svg width="16" height="16" viewBox="0 0 16 16"><ellipse cx="8" cy="8" rx="7" ry="6" fill="#30a0b0"/><circle cx="8" cy="8" r="3.500" fill="#105060"/><path d="M3 3Q8 0 12 3" stroke="#b0d020" fill="none" stroke-width="2"/></svg><span style="left:20px;letter-spacing:-.3px;font-size:11.500px">Genesis</span></div>
<div class="tb" style="left:348px"><svg width="16" height="16"><use href="#wi"/></svg><span>Engin...</span></div>
<div class="tb" style="left:414px"><svg width="16" height="16"><use href="#wi"/></svg><span>Progr...</span></div>
<div class="tb" style="left:480px"><svg width="16" height="16" viewBox="0 0 16 16"><rect x=".5" y=".5" width="15" height="15" fill="#f0b0b0" stroke="#c04040"/><circle cx="8" cy="8" r="6" fill="#102a7a"/><path d="M6 3Q11 5 9 9Q8 11 7 13" stroke="#2a80a0" stroke-width="2" fill="none"/></svg><span>pcbn...</span></div>
<div class="tb" style="left:546px"><svg width="16" height="16" viewBox="0 0 16 16"><rect x="5.500" y="1.500" width="10" height="13" fill="#fff" stroke="#555"/><rect x="1" y="3" width="10" height="10" fill="#2050b0"/><text x="6" y="11" text-anchor="middle" font-size="8" font-weight="bold" font-family="Liberation Sans" fill="#fff">W</text></svg><span>部分...</span></div>
<div class="tb" style="left:612px"><svg width="16" height="16" viewBox="0 0 16 16"><rect x="1" y="2" width="14" height="12" fill="#103a80"/><rect x="3" y="4" width="10" height="3" fill="#60d0e0"/><path d="M3 9H13M3 11H13" stroke="#c0e0f0" stroke-dasharray="2 1"/></svg><span>计算器</span></div>
<div class="tb" style="left:678px"><svg width="16" height="16" viewBox="0 0 16 16"><rect x="2.500" y="1.500" width="11" height="13" fill="#fff" stroke="#222"/><path d="M5 5H11M5 8H11M5 11H11" stroke="#222"/><path d="M4 1V3M7 1V3M10 1V3" stroke="#222"/></svg><span>6aa0...</span></div>
<div class="tb" style="left:744px"><svg width="16" height="16" viewBox="0 0 16 16"><ellipse cx="8" cy="8" rx="7" ry="5" fill="#30a0b0"/><circle cx="9" cy="8" r="3" fill="#105060"/><path d="M1 4L6 7" stroke="#b0d020" stroke-width="2"/></svg><span>CAM...</span></div>
<div class="tb" style="left:810px"><svg width="16" height="16"><use href="#wi"/></svg><span>6aa0...</span></div>
<div class="tb" style="left:876px"><svg width="16" height="16" viewBox="0 0 16 16"><rect x="1.500" y="1.500" width="13" height="13" fill="#d0f0d0" stroke="#108040"/><path d="M4 4L12 12M12 4L4 12" stroke="#108040" stroke-width="2.500"/></svg><span>Micro...</span></div>
<div class="tb" style="left:942px"><svg width="16" height="16" viewBox="0 0 16 16"><path d="M1 5V14H13L15 6H4L3 3H1Z" fill="#f0d860" stroke="#555"/></svg><span>6AA0...</span></div>
<div class="tb" style="left:1008px;background:#ecebe6;border-top-color:#404040;border-left-color:#404040;border-right-color:#fff;border-bottom-color:#fff"><svg width="16" height="16"><use href="#wi"/></svg><span>Grap...</span></div>
<div class="tb" style="left:1074px"><svg width="16" height="16"><use href="#wi"/></svg><span>Job ...</span></div>
<div class="tb" style="left:1140px"><svg width="16" height="16"><use href="#wi"/></svg><span>Grap...</span></div>
<div class="tb" style="left:1206px"><svg width="16" height="16" viewBox="0 0 16 16"><rect x="1" y="7" width="5" height="5" fill="#e05020"/><rect x="7" y="2" width="7" height="5" fill="#f0b030"/><rect x="7" y="9" width="7" height="5" fill="#3070c0"/></svg><span style="left:21px">工具</span></div>
<div style="left:1291px;top:878px;width:149px;height:22px;border-top:1px solid #808080;border-left:1px solid #808080;border-right:1px solid #fff;border-bottom:1px solid #fff;box-sizing:border-box"></div>
<svg class="a" style="left:1293px;top:880px" width="92" height="18" viewBox="0 0 92 18">
<path d="M2 9L9 2L15 9L9 16Z" fill="#e0d030" stroke="#333"/><path d="M5 9L9 5L12 9" stroke="#333" fill="none"/>
<path d="M19 16L27 4L29 16Z" fill="#e02020"/><path d="M29 16L27 4L35 16Z" fill="#20a050"/>
<path d="M38 3L50 16M50 3L38 16" stroke="#602090" stroke-width="3"/>
<circle cx="59" cy="10" r="6" fill="#fff" stroke="#2080b0" stroke-width="1.500"/><path d="M57 7L61 13" stroke="#e02020" stroke-width="2"/><path d="M58 1H60V4H58Z" fill="#e0a020"/>
<rect x="68" y="2" width="15" height="15" fill="#a8b080"/><circle cx="75.500" cy="9.500" r="5" fill="#e8e8d8" stroke="#505040" stroke-width="1.500"/><path d="M75.500 7V10H78" stroke="#505040" fill="none"/>
</svg>
<div style="left:1400px;top:881px;font:12px/16px 'Liberation Sans',sans-serif;color:#111">5:07</div>

</div></body></html>
